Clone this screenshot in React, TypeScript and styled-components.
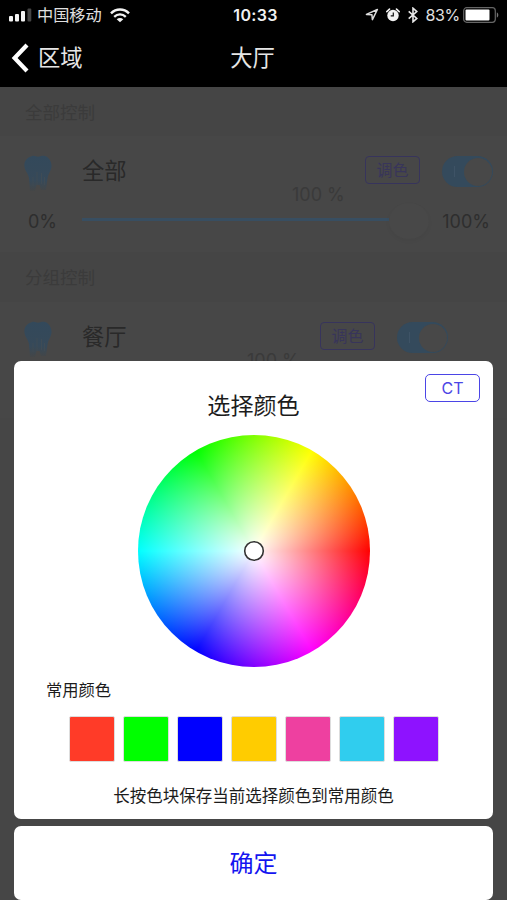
import React from "react";
import styled, { createGlobalStyle } from "styled-components";

const GlobalStyle = createGlobalStyle`
  *, *::before, *::after { box-sizing: border-box; }
  body {
    margin: 0;
    background: #464646;
    font-family: Inter, "Noto Sans CJK SC", sans-serif;
    overflow: hidden;
  }
  button { font-family: inherit; padding: 0; margin: 0; }
`;

const Screen = styled.div`
  position: relative;
  width: 507px;
  height: 900px;
  overflow: hidden;
  display: flex;
  flex-direction: column;
  background: #464646;
`;

const StatusBar = styled.div`
  display: grid;
  grid-template-columns: 1fr auto 1fr;
  align-items: center;
  flex: none;
  height: 30px;
  padding: 0 8px 0 9px;
  background: #000;
  color: #e0e0e0;
`;

const StatusGroup = styled.div<{ $end?: boolean }>`
  display: flex;
  align-items: center;
  justify-content: ${(p) => (p.$end ? "flex-end" : "flex-start")};
  height: 30px;
  svg { flex: none; display: block; }
`;

const Carrier = styled.span`
  margin: 0 8px 0 5px;
  font-size: 16.2px;
  line-height: 30px;
`;

const Clock = styled.span`
  padding-left: 3px;
  font-size: 16px;
  font-weight: 600;
  letter-spacing: 0.3px;
  line-height: 30px;
  color: #f2f2f2;
`;

const AlarmGap = styled.span`
  margin: 0 8px 0 7px;
`;

const BatteryText = styled.span`
  margin: 0 3px 0 7px;
  font-size: 16px;
  letter-spacing: -0.3px;
`;

const NavBar = styled.header`
  display: grid;
  grid-template-columns: 1fr auto 1fr;
  align-items: center;
  flex: none;
  height: 57px;
  padding: 0 13px 1px 11px;
  background: #000;
  color: #e6e6e6;
  font-size: 22.3px;
  line-height: 56px;
`;

const Back = styled.div`
  display: flex;
  align-items: center;
  gap: 9px;
`;

const SectionTitle = styled.div<{ $height: number }>`
  flex: none;
  height: ${(p) => p.$height}px;
  padding-left: 25px;
  background: #454545;
  color: #3b3b3b;
  font-size: 17.5px;
  line-height: 51px;
`;

const ZoneBlock = styled.section`
  flex: none;
  height: 116px;
  background: #474747;
`;

const ZoneRow = styled.div<{ $inset: number }>`
  display: flex;
  align-items: flex-start;
  height: 49px;
  padding: 19px ${(p) => p.$inset}px 0 24px;
`;

const ZoneName = styled.div`
  flex: 1;
  height: 30px;
  padding-left: 30px;
  color: #292929;
  font-size: 22.3px;
  line-height: 31px;
`;

const TintButton = styled.button`
  width: 55px;
  height: 28px;
  margin: 1px 22px 0 0;
  border: 1.5px solid #37345c;
  border-radius: 4px;
  background: transparent;
  color: #38355a;
  font-size: 16px;
  line-height: 25px;
`;

const Switch = styled.div`
  display: flex;
  justify-content: flex-end;
  align-items: center;
  width: 51px;
  height: 31px;
  margin-top: 1px;
  padding-right: 1.5px;
  border-radius: 16px;
  background: #344a5c;
`;

const SwitchMark = styled.span`
  width: 1px;
  height: 11px;
  margin-right: 9px;
  background: #3e5366;
`;

const SwitchKnob = styled.span`
  width: 28px;
  height: 28px;
  border-radius: 50%;
  background: #484848;
`;

const ValueLabel = styled.div<{ $left: number }>`
  height: 20px;
  margin-top: -1px;
  padding-left: ${(p) => p.$left}px;
  color: #3a3a3a;
  font-size: 18px;
  line-height: 21px;
`;

const SliderRow = styled.div`
  display: grid;
  grid-template-columns: 54px 307px 40px 1fr;
  grid-template-rows: 34px;
  align-items: center;
  height: 34px;
  padding: 0 17px 0 28px;
  color: #2e2e2e;
  font-size: 18px;
`;

const Track = styled.div`
  height: 3px;
  margin-bottom: 3px;
  background: #384e61;
`;

const Thumb = styled.div`
  height: 36px;
  border-radius: 50%;
  background: #484848;
  box-shadow: 0 2px 4px rgba(0, 0, 0, 0.04);
`;

const Maximum = styled.span`
  text-align: right;
`;

const Sheet = styled.div`
  position: absolute;
  inset: 361px 14px 0 14px;
  display: flex;
  flex-direction: column;
  gap: 7px;
`;

const PickerCard = styled.div`
  display: flex;
  flex-direction: column;
  align-items: center;
  flex: none;
  height: 458px;
  border-radius: 7px;
  background: #fff;
  color: #1c1c1c;
`;

const ModeButton = styled.button`
  align-self: flex-end;
  flex: none;
  width: 55px;
  height: 28px;
  margin: 13px 13px 0 0;
  border: 1.5px solid #4b45e6;
  border-radius: 5px;
  background: #fff;
  color: #4b45e6;
  font-size: 16px;
  line-height: 25px;
`;

const PickerTitle = styled.h1`
  margin: -14px 0 0;
  font-size: 23.1px;
  font-weight: 400;
  line-height: 36px;
`;

const Wheel = styled.div`
  display: flex;
  align-items: center;
  justify-content: center;
  flex: none;
  width: 232px;
  height: 232px;
  margin: 11px 0 0 1px;
  border-radius: 50%;
  background:
    radial-gradient(circle closest-side, #fff, rgba(255, 255, 255, 0)),
    conic-gradient(from 90deg, #f00, #f0f, #00f, #0ff, #0f0, #ff0, #f00);
`;

const WheelCursor = styled.svg`
  display: block;
  width: 22px;
  height: 22px;
`;

const PaletteLabel = styled.div`
  align-self: flex-start;
  margin: 11px 0 0 32px;
  font-size: 16.3px;
  line-height: 25px;
`;

const Palette = styled.div`
  display: flex;
  gap: 8px;
  margin-top: 13px;
`;

const Swatch = styled.div<{ $color: string }>`
  width: 46px;
  height: 46px;
  border: 1px solid #ddd;
  border-radius: 2px;
  background: ${(p) => p.$color};
`;

const Hint = styled.div`
  margin-top: 22px;
  font-size: 16.5px;
  line-height: 24px;
`;

const ConfirmButton = styled.button`
  flex: none;
  height: 74px;
  padding-top: 2px;
  border: 0;
  border-radius: 7px;
  background: #fff;
  color: #1414f0;
  font-size: 24px;
  line-height: 72px;
`;

const SignalIcon = () => (
  <svg width="23" height="14" viewBox="0 0 23 14">
    <rect x="0" y="8" width="4" height="5.5" rx="1" fill="#f4f4f4" />
    <rect x="6" y="6" width="4" height="7.5" rx="1" fill="#f4f4f4" />
    <rect x="12" y="3" width="4" height="10.5" rx="1" fill="#f4f4f4" />
    <rect x="18.5" y="0.5" width="3.8" height="13" rx="1" fill="#444" />
  </svg>
);

const WifiIcon = () => (
  <svg width="20" height="15" viewBox="0 0 20 15" fill="none" stroke="#f4f4f4">
    <path d="M1 5.3C6.2.2 13.8.2 19 5.3" strokeWidth="2.5" />
    <path d="M4.2 8.8c3.3-3.2 8.3-3.2 11.6 0" strokeWidth="2.3" />
    <path d="M10 14.3 6.7 11.2c1.9-1.7 4.7-1.7 6.6 0Z" fill="#f4f4f4" stroke="none" />
  </svg>
);

const LocationIcon = () => (
  <svg width="14" height="14" viewBox="0 0 14 14" fill="none">
    <path d="M1.4 6.4 12.4 1.5 7.4 11.6 6.9 6.7Z" stroke="#ddd" strokeWidth="1.5" strokeLinejoin="round" />
  </svg>
);

const AlarmIcon = () => (
  <svg width="14" height="14" viewBox="0 0 14 14" fill="none">
    <circle cx="7" cy="7.5" r="5.7" fill="#f2f2f2" />
    <path d="M.8 3.6 3.5 1.1M13.2 3.6 10.5 1.1" stroke="#f2f2f2" strokeWidth="1.6" strokeLinecap="round" />
    <path d="M7.3 4.4v3.5H4.7" stroke="#111" strokeWidth="1.2" />
  </svg>
);

const BluetoothIcon = () => (
  <svg width="10" height="16" viewBox="0 0 10 16" fill="none">
    <path d="M.7 4.4 8.8 11.4 5 14.8V1.2L8.8 4.6.7 11.6" stroke="#e8e8e8" strokeWidth="1.6" />
  </svg>
);

const BatteryIcon = () => (
  <svg width="36" height="16" viewBox="0 0 36 16">
    <rect x=".7" y=".7" width="31.6" height="14.6" rx="3" fill="none" stroke="#666" strokeWidth="1.2" />
    <rect x="2.5" y="2.5" width="24" height="11" rx="1" fill="#fff" />
    <path d="M33.8 5.5c2 .5 2 4.5 0 5Z" fill="#777" />
  </svg>
);

const BackIcon = () => (
  <svg width="18" height="30" viewBox="0 0 18 30" fill="none">
    <path d="M16 2 3.6 15 16 28" stroke="#fff" strokeWidth="4.2" />
  </svg>
);

const LampIcon = ({ id }: { id: string }) => (
  <svg width="28" height="37" viewBox="0 0 28 37">
    <defs>
      <linearGradient id={id} x1="0" y1="0" x2="0" y2="1">
        <stop offset="0" stopColor="#33495b" />
        <stop offset="0.7" stopColor="#364959" />
        <stop offset="1" stopColor="#444647" />
      </linearGradient>
    </defs>
    <path
      d="M8 1c2-.8 4 .2 6 .8 2-.6 5-1.6 7-.8 4 1.2 7 6 6.5 11-.4 4-3.5 7-4 11.500L22 35h-5l-1.500-5h-3L11 36H6L5 23C4 18 .8 16 .4 11 0 6 3 2.500 8 1Z"
      fill={`url(#${id})`}
    />
    <path d="M9 22v9M13 17v13M17.500 18v11M20.500 22v8" stroke="#434d55" strokeWidth=".7" />
  </svg>
);

interface ZoneProps {
  id: string;
  name: string;
  inset: number;
  valueLeft: number;
  withSlider?: boolean;
}

const Zone = ({ id, name, inset, valueLeft, withSlider }: ZoneProps) => (
  <ZoneBlock>
    <ZoneRow $inset={inset}>
      <LampIcon id={id} />
      <ZoneName>{name}</ZoneName>
      <TintButton>调色</TintButton>
      <Switch>
        <SwitchMark />
        <SwitchKnob />
      </Switch>
    </ZoneRow>
    <ValueLabel $left={valueLeft}>100 %</ValueLabel>
    {withSlider && (
      <SliderRow>
        <span>0%</span>
        <Track />
        <Thumb />
        <Maximum>100%</Maximum>
      </SliderRow>
    )}
  </ZoneBlock>
);

const swatches = ["#ff3b28", "#00ff00", "#0000ff", "#ffcc00", "#ee40a0", "#30cdee", "#8e12ff"];

export default function App() {
  return (
    <>
      <GlobalStyle />
      <Screen>
        <StatusBar>
          <StatusGroup>
            <SignalIcon />
            <Carrier>中国移动</Carrier>
            <WifiIcon />
          </StatusGroup>
          <Clock>10:33</Clock>
          <StatusGroup $end>
            <LocationIcon />
            <AlarmGap>
              <AlarmIcon />
            </AlarmGap>
            <BluetoothIcon />
            <BatteryText>83%</BatteryText>
            <BatteryIcon />
          </StatusGroup>
        </StatusBar>
        <NavBar>
          <Back>
            <BackIcon />
            <span>区域</span>
          </Back>
          <span>大厅</span>
        </NavBar>
        <SectionTitle $height={49}>全部控制</SectionTitle>
        <Zone id="lamp-all" name="全部" inset={14} valueLeft={292} withSlider />
        <SectionTitle $height={50}>分组控制</SectionTitle>
        <Zone id="lamp-dining" name="餐厅" inset={59} valueLeft={247} />
        <Sheet>
          <PickerCard>
            <ModeButton>CT</ModeButton>
            <PickerTitle>选择颜色</PickerTitle>
            <Wheel>
              <WheelCursor viewBox="0 0 22 22">
                <circle cx="11" cy="11" r="9.3" fill="#fff" stroke="#333" strokeWidth="1.6" />
              </WheelCursor>
            </Wheel>
            <PaletteLabel>常用颜色</PaletteLabel>
            <Palette>
              {swatches.map((c) => (
                <Swatch key={c} $color={c} />
              ))}
            </Palette>
            <Hint>长按色块保存当前选择颜色到常用颜色</Hint>
          </PickerCard>
          <ConfirmButton>确定</ConfirmButton>
        </Sheet>
      </Screen>
    </>
  );
}
